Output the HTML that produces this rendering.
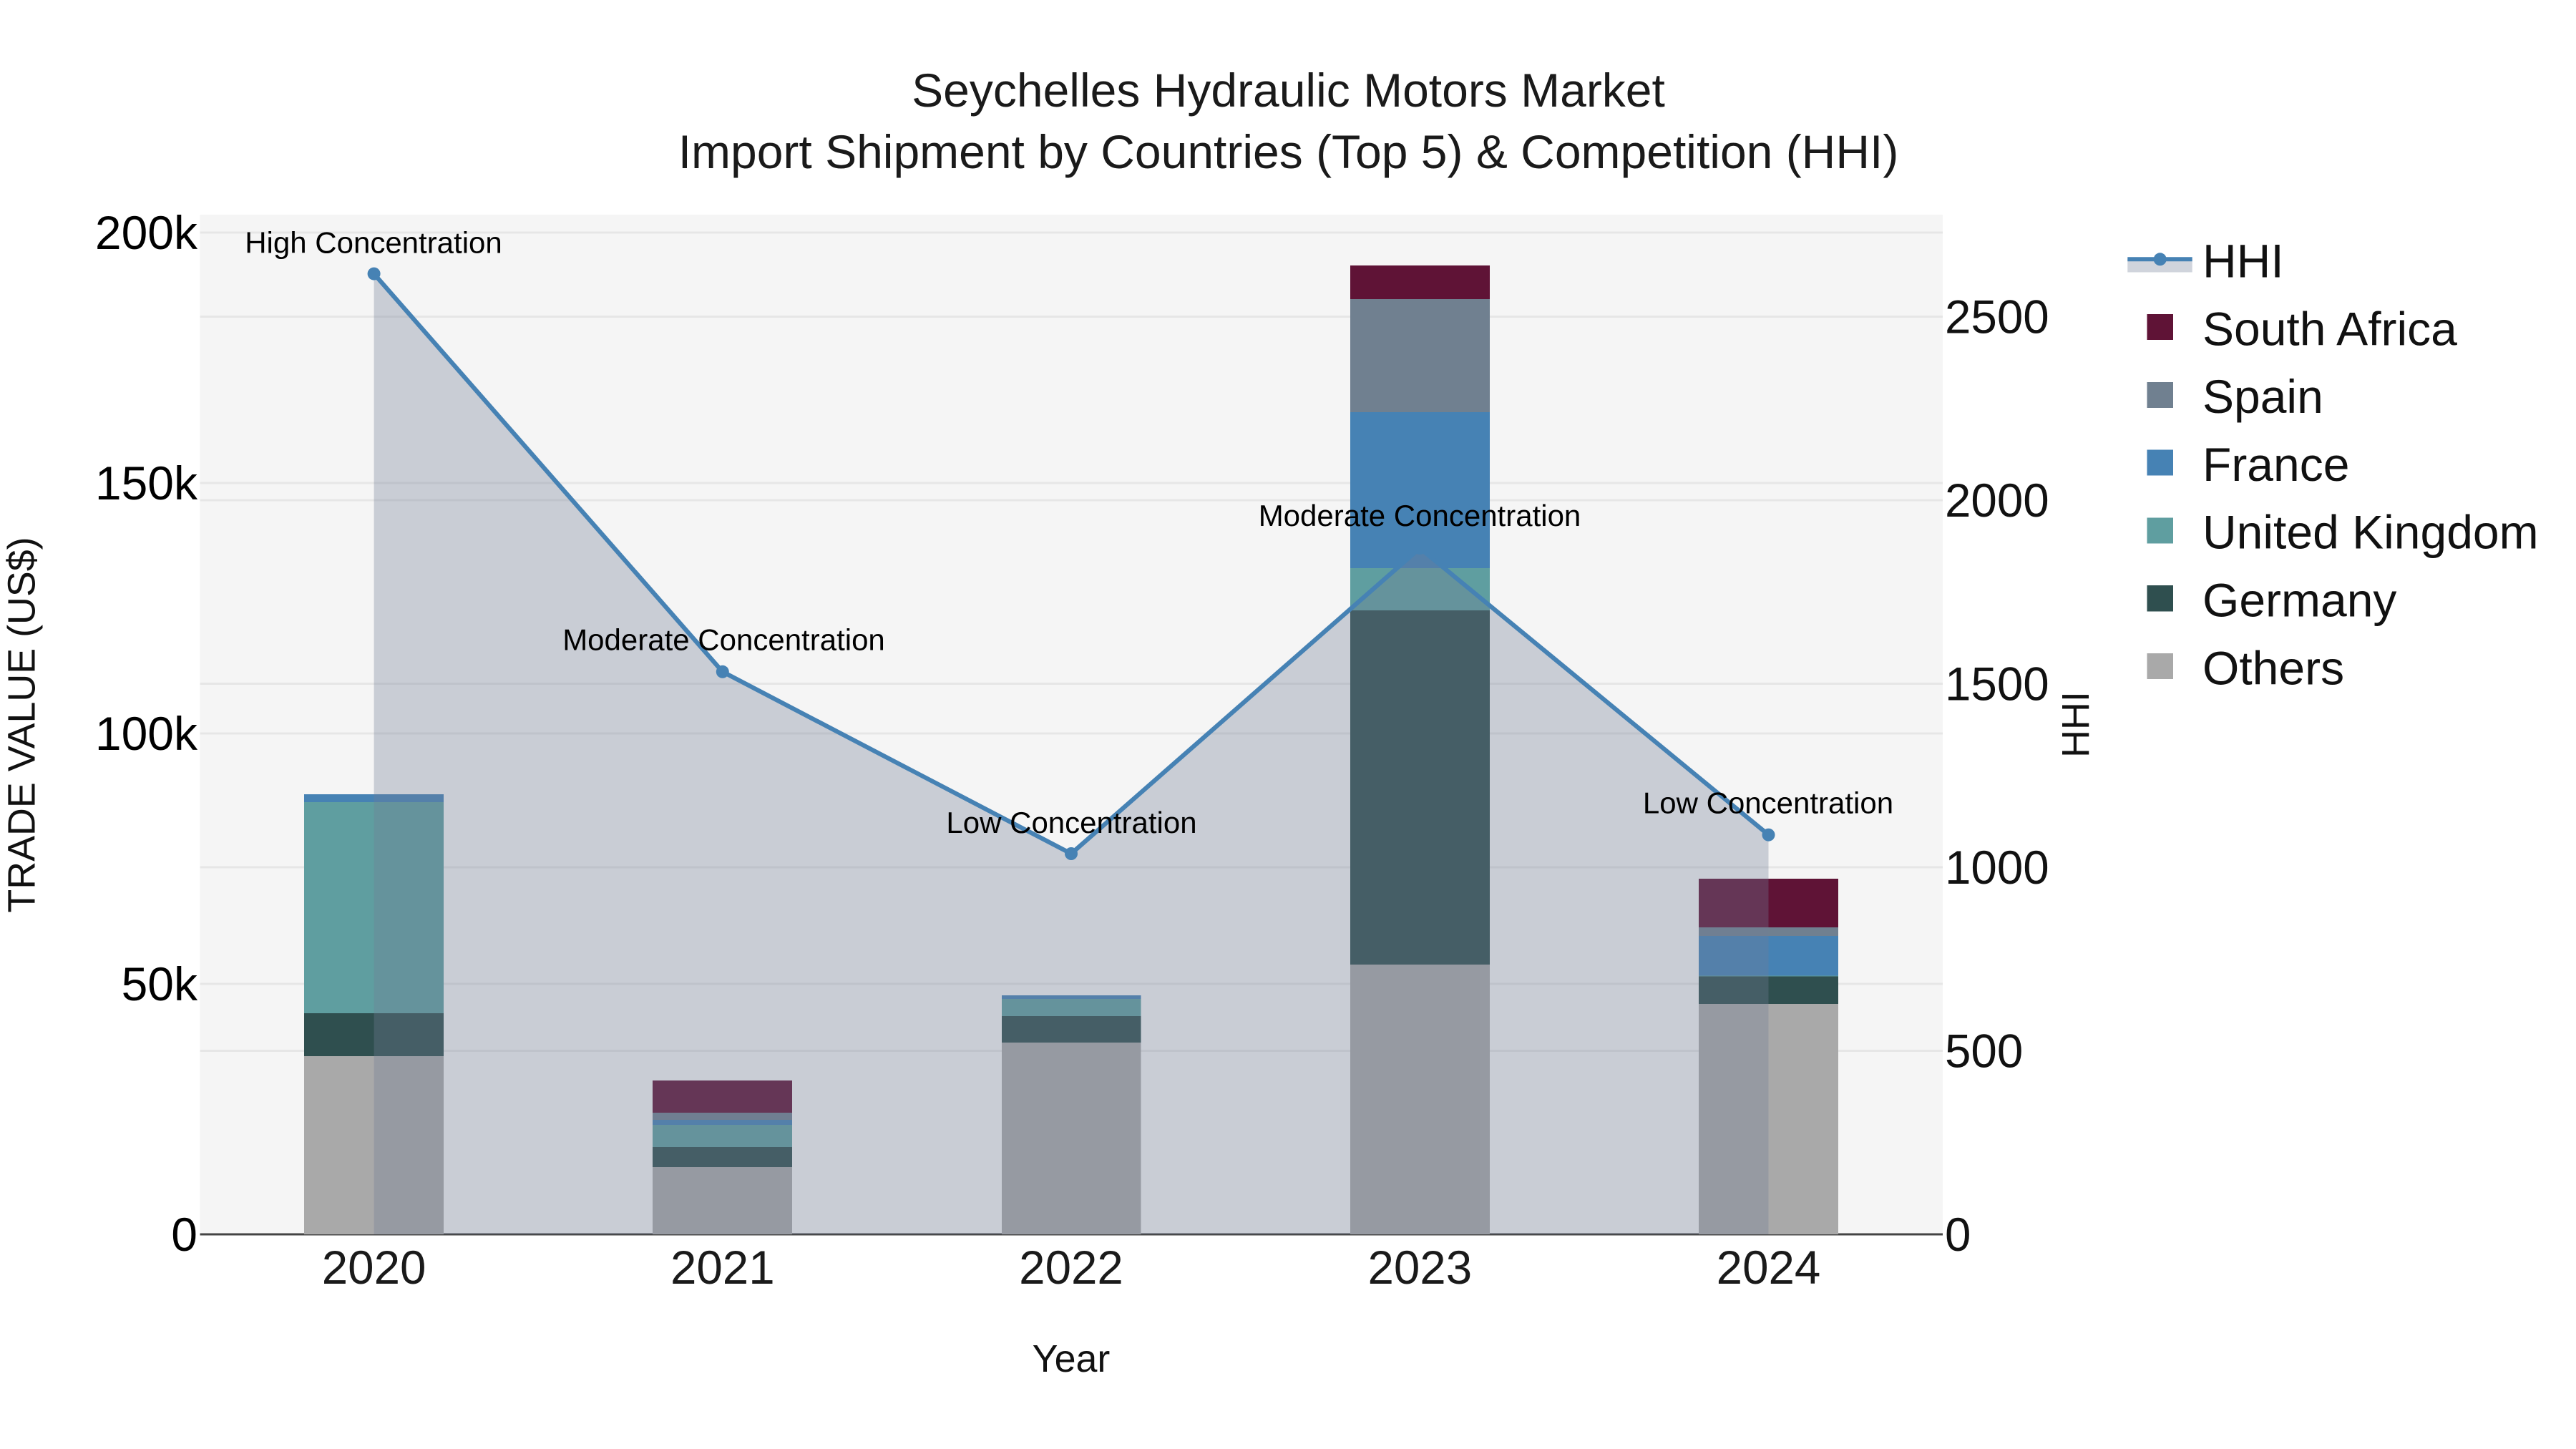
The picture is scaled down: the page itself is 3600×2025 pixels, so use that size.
<!DOCTYPE html>
<html>
<head>
<meta charset="utf-8">
<style>
html,body{margin:0;padding:0;background:#fff;width:3600px;height:2025px;overflow:hidden}
svg{display:block}
text{font-family:"Liberation Sans",Arial,sans-serif;fill:#111}
.t{font-size:66px;fill:#1a1a1a}
.a{font-size:42px;fill:#000;text-anchor:middle}
.l{font-size:66px;text-anchor:end;fill:#000}
.r{font-size:65.5px;fill:#111}
.x{font-size:65.5px;text-anchor:middle;fill:#1a1a1a}
.k{font-size:66px;fill:#111}
</style>
</head>
<body>
<svg width="3600" height="2025" viewBox="0 0 3600 2025" xmlns="http://www.w3.org/2000/svg">
<rect width="3600" height="2025" fill="#fff"/>
<rect x="279.5" y="300" width="2435.5" height="1425" fill="#f5f5f5"/>
<!-- grids -->
<g stroke="#e6e6e6" stroke-width="3" fill="none">
<path d="M279.5 325H2715M279.5 675H2715M279.5 1025H2715M279.5 1375H2715"/>
<path d="M279.5 442.500H2715M279.5 699H2715M279.5 955.500H2715M279.5 1212H2715M279.5 1468.500H2715"/>
</g>
<path d="M279.5 1725H2715" stroke="#444" stroke-width="3" fill="none"/>
<!-- bars -->
<g shape-rendering="crispEdges">
<rect x="425" y="1476" width="195" height="249" fill="#a9a9a9"/>
<rect x="425" y="1416" width="195" height="60" fill="#2f4f4f"/>
<rect x="425" y="1121" width="195" height="295" fill="#5f9ea0"/>
<rect x="425" y="1110" width="195" height="11" fill="#4682b4"/>

<rect x="912" y="1631" width="195" height="94" fill="#a9a9a9"/>
<rect x="912" y="1603" width="195" height="28" fill="#2f4f4f"/>
<rect x="912" y="1572" width="195" height="31" fill="#5f9ea0"/>
<rect x="912" y="1565" width="195" height="7" fill="#4682b4"/>
<rect x="912" y="1555" width="195" height="10" fill="#708090"/>
<rect x="912" y="1510" width="195" height="45" fill="#5f1336"/>

<rect x="1400" y="1457" width="194.500" height="268" fill="#a9a9a9"/>
<rect x="1400" y="1420" width="194.500" height="37" fill="#2f4f4f"/>
<rect x="1400" y="1396" width="194.500" height="24" fill="#5f9ea0"/>
<rect x="1400" y="1391" width="194.500" height="5" fill="#4682b4"/>

<rect x="1887" y="1348" width="195" height="377" fill="#a9a9a9"/>
<rect x="1887" y="853" width="195" height="495" fill="#2f4f4f"/>
<rect x="1887" y="794" width="195" height="59" fill="#5f9ea0"/>
<rect x="1887" y="576" width="195" height="218" fill="#4682b4"/>
<rect x="1887" y="418" width="195" height="158" fill="#708090"/>
<rect x="1887" y="371" width="195" height="47" fill="#5f1336"/>

<rect x="2374" y="1403" width="195" height="322" fill="#a9a9a9"/>
<rect x="2374" y="1364.500" width="195" height="38.500" fill="#2f4f4f"/>
<rect x="2374" y="1363.500" width="195" height="1" fill="#5f9ea0"/>
<rect x="2374" y="1308" width="195" height="55.500" fill="#4682b4"/>
<rect x="2374" y="1296" width="195" height="12" fill="#708090"/>
<rect x="2374" y="1228" width="195" height="68" fill="#5f1336"/>
</g>
<!-- HHI area and line -->
<path d="M522.600 382.600L1009.800 938.800L1497 1193L1984.300 766L2471.500 1166.700V1725H522.600Z" fill="rgb(114,126,150)" fill-opacity=".335"/>
<path d="M522.600 382.600L1009.800 938.800L1497 1193L1984.300 766L2471.500 1166.700" fill="none" stroke="#4682b4" stroke-width="6.200" stroke-linejoin="round"/>
<g fill="#4682b4">
<circle cx="522.600" cy="382.600" r="9"/>
<circle cx="1009.800" cy="938.800" r="9"/>
<circle cx="1497" cy="1193" r="9"/>
<circle cx="1984.300" cy="766" r="9"/>
<circle cx="2471.500" cy="1166.700" r="9"/>
</g>
<!-- annotations -->
<text class="a" x="522" y="353.500">High Concentration</text>
<text class="a" x="1011.500" y="908.500">Moderate Concentration</text>
<text class="a" x="1497.500" y="1164">Low Concentration</text>
<text class="a" x="1984" y="735">Moderate Concentration</text>
<text class="a" x="2471" y="1136.500">Low Concentration</text>
<!-- title -->
<text class="t" text-anchor="middle" x="1800.500" y="149">Seychelles Hydraulic Motors Market</text>
<text class="t" text-anchor="middle" x="1800.500" y="235">Import Shipment by Countries (Top 5) &amp; Competition (HHI)</text>
<!-- left ticks -->
<text class="l" x="276" y="348">200k</text>
<text class="l" x="276" y="698">150k</text>
<text class="l" x="276" y="1048">100k</text>
<text class="l" x="276" y="1398">50k</text>
<text class="l" x="276" y="1748">0</text>
<!-- right ticks -->
<text class="r" x="2718" y="465.500">2500</text>
<text class="r" x="2718" y="722">2000</text>
<text class="r" x="2718" y="978.500">1500</text>
<text class="r" x="2718" y="1235">1000</text>
<text class="r" x="2718" y="1491.500">500</text>
<text class="r" x="2718" y="1748">0</text>
<!-- x ticks -->
<text class="x" x="522.600" y="1794">2020</text>
<text class="x" x="1009.800" y="1794">2021</text>
<text class="x" x="1497" y="1794">2022</text>
<text class="x" x="1984.300" y="1794">2023</text>
<text class="x" x="2471.500" y="1794">2024</text>
<!-- axis titles -->
<text x="1497" y="1917" text-anchor="middle" style="font-size:53.800px">Year</text>
<text transform="translate(48.500 1013) rotate(-90)" text-anchor="middle" style="font-size:53.800px">TRADE VALUE (US$)</text>
<text transform="translate(2919 1012.500) rotate(-90)" text-anchor="middle" style="font-size:53.800px">HHI</text>
<!-- legend -->
<rect x="2973.300" y="362" width="90.400" height="18.500" fill="rgb(114,126,150)" fill-opacity=".335"/>
<path d="M2973.300 362.300H3063.700" stroke="#4682b4" stroke-width="6"/>
<circle cx="3018.700" cy="362.300" r="9" fill="#4682b4"/>
<g shape-rendering="crispEdges">
<rect x="3000.500" y="439" width="36.500" height="36" fill="#5f1336"/>
<rect x="3000.500" y="534" width="36.500" height="36" fill="#708090"/>
<rect x="3000.500" y="628.500" width="36.500" height="36" fill="#4682b4"/>
<rect x="3000.500" y="723.500" width="36.500" height="36" fill="#5f9ea0"/>
<rect x="3000.500" y="818" width="36.500" height="36.500" fill="#2f4f4f"/>
<rect x="3000.500" y="913" width="36.500" height="36" fill="#a9a9a9"/>
</g>
<text class="k" x="3078" y="387.500">HHI</text>
<text class="k" x="3078" y="482.300">South Africa</text>
<text class="k" x="3078" y="577.100">Spain</text>
<text class="k" x="3078" y="671.900">France</text>
<text class="k" x="3078" y="766.700">United Kingdom</text>
<text class="k" x="3078" y="861.500">Germany</text>
<text class="k" x="3078" y="956.300">Others</text>
</svg>
</body>
</html>
